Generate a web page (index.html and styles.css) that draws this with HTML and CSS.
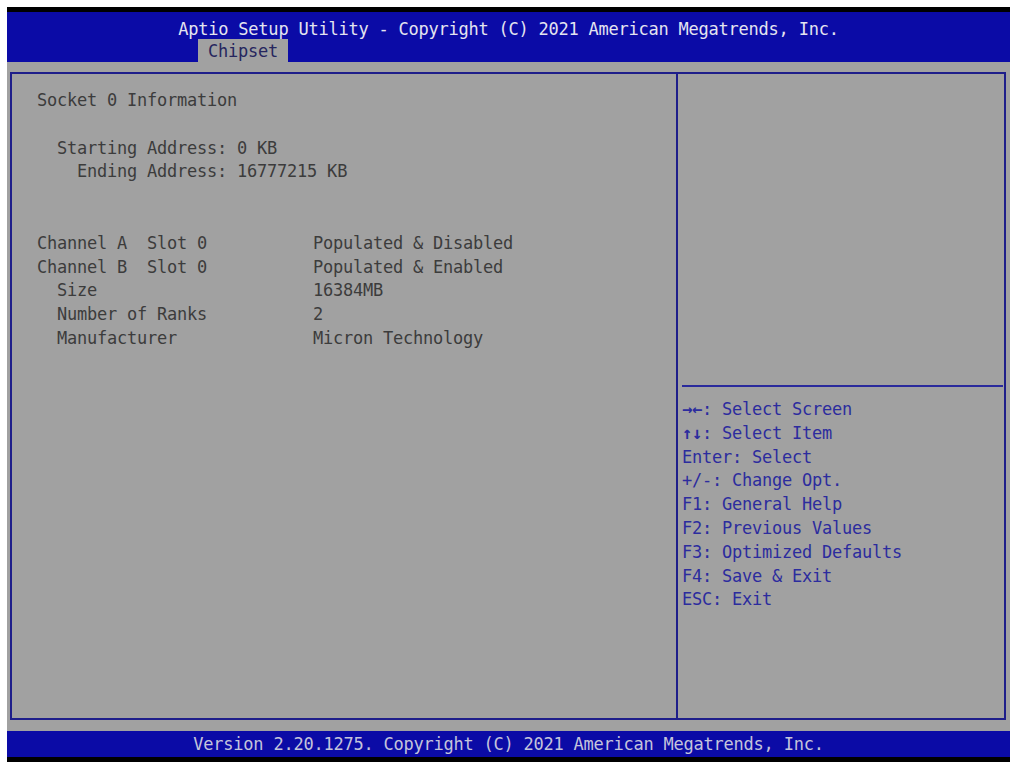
FILE: index.html
```html
<!DOCTYPE html>
<html lang="en">
<head>
	<meta charset="utf-8">
	<title>Aptio Setup Utility - Chipset</title>
	<link rel="stylesheet" href="styles.css">
</head>
<body>
	<div class="screen">
		<div class="top">
			<div class="title">Aptio Setup Utility - Copyright (C) 2021 American Megatrends, Inc.</div>
			<div class="tabs"><span class="tab">Chipset</span></div>
		</div>
		<div class="panel">
			<div class="main">
				<div class="row">Socket 0 Information</div>
				<div class="group">
					<div class="row i1">Starting Address: 0 KB</div>
					<div class="row i2">Ending Address: 16777215 KB</div>
				</div>
				<div class="group wide">
					<div class="row pair"><span>Channel A  Slot 0</span><span>Populated &amp; Disabled</span></div>
					<div class="row pair"><span>Channel B  Slot 0</span><span>Populated &amp; Enabled</span></div>
					<div class="row pair"><span class="i1">Size</span><span>16384MB</span></div>
					<div class="row pair"><span class="i1">Number of Ranks</span><span>2</span></div>
					<div class="row pair"><span class="i1">Manufacturer</span><span>Micron Technology</span></div>
				</div>
			</div>
			<div class="side">
				<div class="item-help"></div>
				<div class="keys">
					<div class="row"><b>&rarr;&larr;</b>: Select Screen</div>
					<div class="row"><b>&uarr;&darr;</b>: Select Item</div>
					<div class="row">Enter: Select</div>
					<div class="row">+/-: Change Opt.</div>
					<div class="row">F1: General Help</div>
					<div class="row">F2: Previous Values</div>
					<div class="row">F3: Optimized Defaults</div>
					<div class="row">F4: Save &amp; Exit</div>
					<div class="row">ESC: Exit</div>
				</div>
			</div>
		</div>
		<div class="bottom">Version 2.20.1275. Copyright (C) 2021 American Megatrends, Inc.</div>
	</div>
</body>
</html>
```

FILE: styles.css
```css
*{
	margin: 0;
	padding: 0;
	box-sizing: border-box;
}
body{
	background-color: #fff;
	font-family: "DejaVu Sans Mono", "Liberation Mono", monospace;
	font-size: 17px;
	letter-spacing: -0.23px;
	overflow: hidden;
}
.screen{
	width: 1003px;
	height: 755px;
	margin: 7px 0 0 7px;
	background-color: #a1a1a1;
	display: flex;
	flex-direction: column;
}
/* title bar + tab */
.top{
	height: 55px;
	border-top: 5px solid #000;
	background-color: #0b0ba6;
	color: #e4e4f0;
}
.title{
	text-align: center;
	line-height: 20px;
	padding-top: 7px;
	white-space: pre;
}
.tabs{
	padding-left: 191px;
	height: 23px;
}
.tab{
	display: inline-block;
	height: 23px;
	line-height: 25px;
	padding: 0 10px;
	background-color: #a1a1a1;
	color: #26265e;
	vertical-align: top;
}
/* the framed area */
.panel{
	width: 996px;
	height: 648px;
	margin: 10px 0 0 3px;
	border: 2px solid #1e1e8a;
	display: grid;
	grid-template-columns: 664px 1fr;
}
.main{
	padding: 15px 0 0 25px;
	color: #3c3c3c;
}
.row{
	height: 23.8px;
	line-height: 23.8px;
	white-space: pre;
}
.group{
	margin-top: 23.8px;
}
.group.wide{
	margin-top: 47.6px;
}
.i1{
	padding-left: 20px;
}
.i2{
	padding-left: 40px;
}
.pair{
	display: grid;
	grid-template-columns: 276px auto;
}
.side{
	border-left: 2px solid #1e1e8a;
	padding: 0 1px 0 4px;
}
.item-help{
	height: 311px;
}
.keys{
	border-top: 2px solid #2a2a9c;
	padding-top: 11px;
	color: #2c2c9e;
}
.keys b{
	font-weight: bold;
}
.bottom{
	height: 31px;
	margin-top: 11px;
	border-bottom: 5px solid #000;
	background-color: #0b0ba6;
	color: #c4c4dc;
	text-align: center;
	line-height: 27px;
	white-space: pre;
}
```
